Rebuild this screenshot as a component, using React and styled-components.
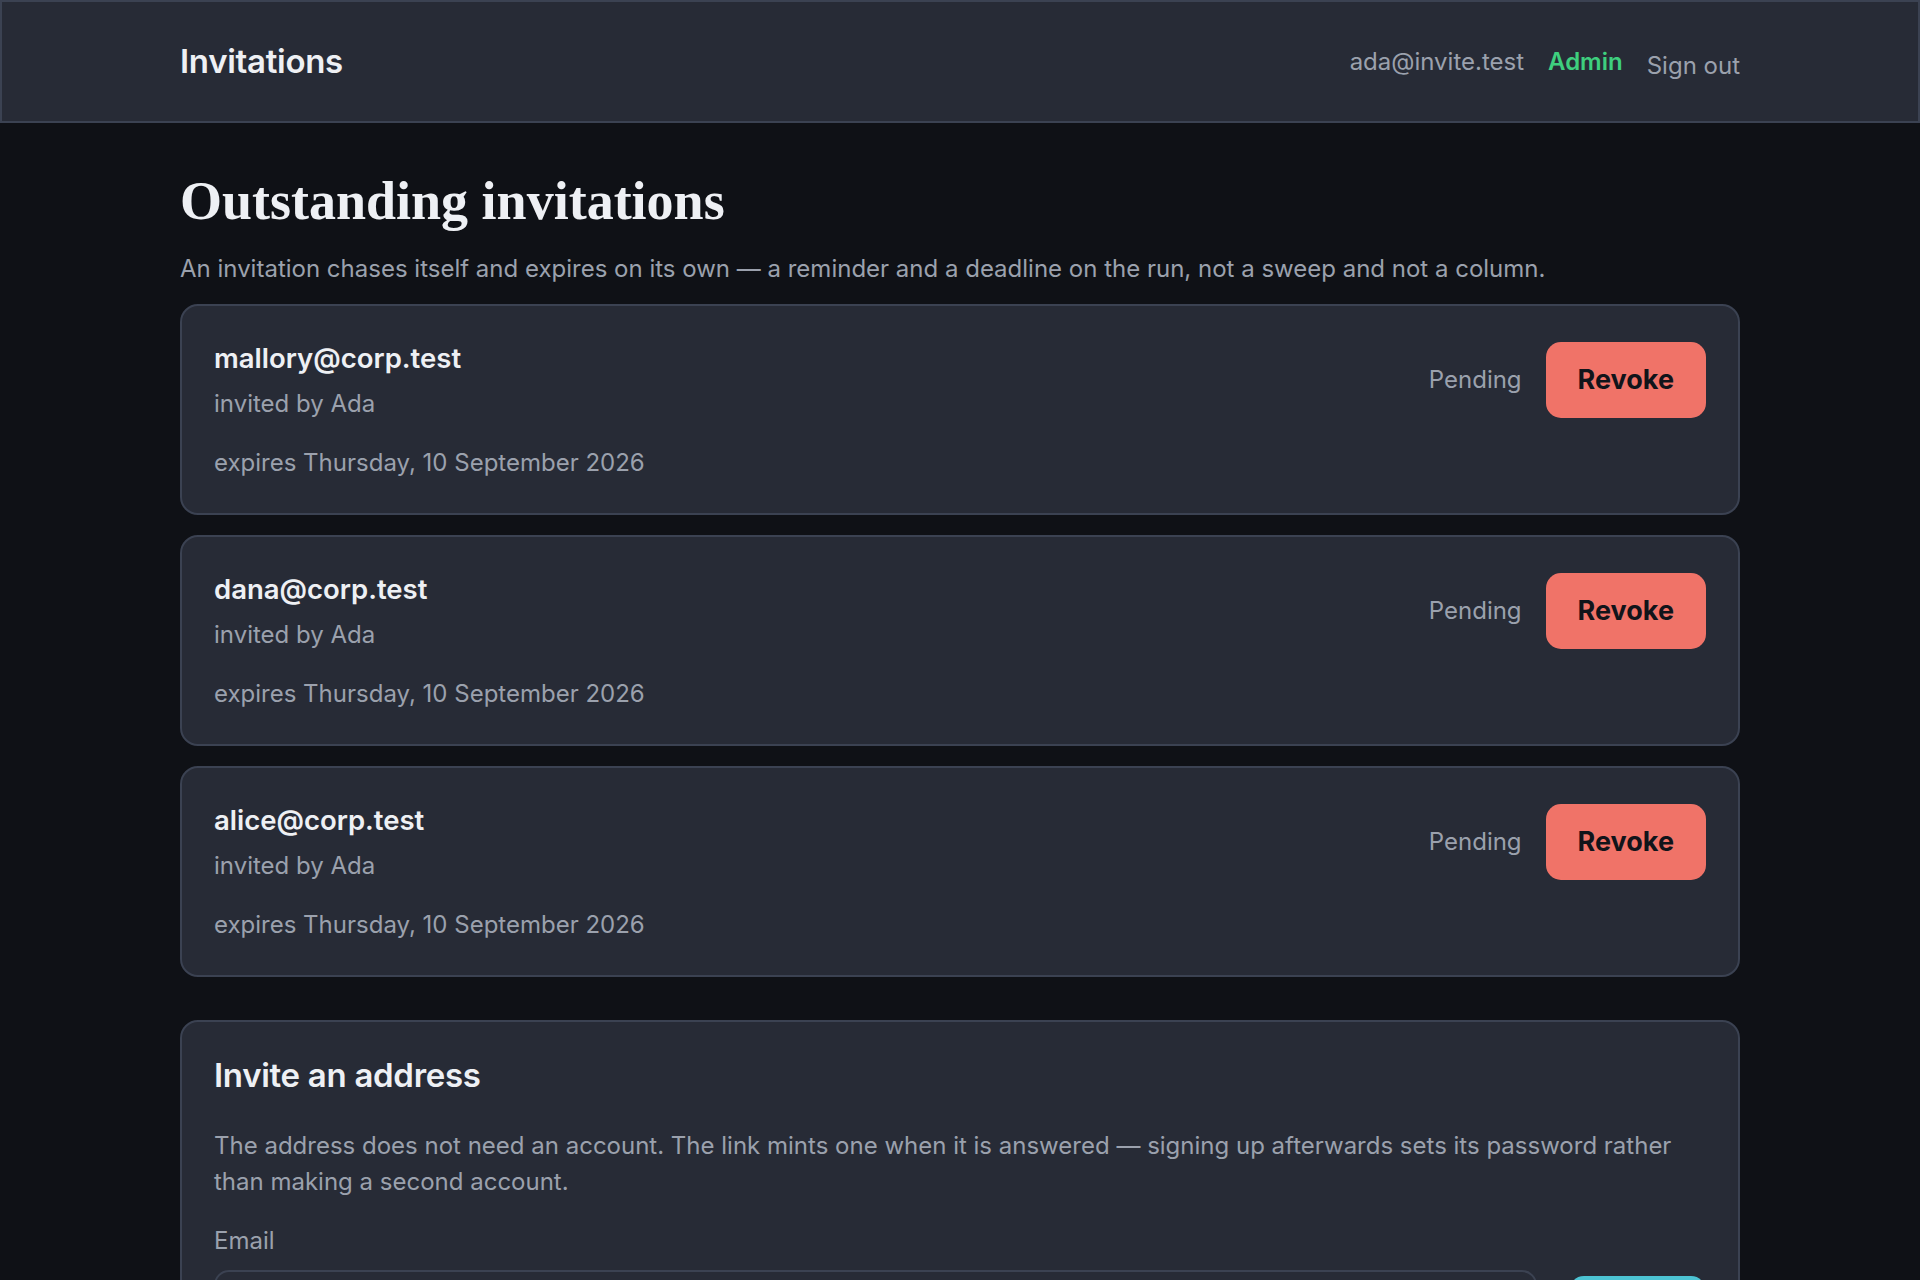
import React, { useState } from 'react'
import styled, { createGlobalStyle } from 'styled-components'

const GlobalStyle = createGlobalStyle`
  body {
    margin: 0;
    background-color: #0f1116;
    font-family: Inter, "Noto Sans", sans-serif;
    color: #eef0f4;
  }
`;

const Header = styled.header`
  border: 2px solid #3b4252;
  background-color: #272b36;
`;
const HeaderInner = styled.div`
  max-width: 1560px;
  margin: 0 auto;
  height: 119px;
  display: flex;
  align-items: center;
  justify-content: space-between;
`;
const Brand = styled.div`
  font-size: 33px;
  font-weight: 600;
  letter-spacing: -0.3px;
  margin-bottom: 2px;
`;
const Nav = styled.nav`
  display: flex;
  align-items: center;
  gap: 24px;
  font-size: 24px;
`;
const UserEmail = styled.span`
  color: #9ba1ad;
`;
const Role = styled.span`
  color: #3ecf7e;
  font-weight: 600;
`;
const SignOut = styled.button`
  background: none;
  border: none;
  padding: 0;
  margin-top: 8px;
  font-family: inherit;
  font-size: 24px;
  color: #9ba1ad;
  cursor: pointer;
`;

const Main = styled.main`
  max-width: 1560px;
  margin: 0 auto;
  padding: 46px 0 60px;
`;
const Title = styled.h1`
  margin: 0;
  font-family: "Liberation Serif", "Times New Roman", serif;
  font-size: 54px;
  font-weight: 700;
  line-height: 1.2;
`;
const Lead = styled.p`
  margin: 17px 0 17px;
  font-size: 24px;
  line-height: 36px;
  color: #9ba1ad;
`;
const List = styled.div`
  display: flex;
  flex-direction: column;
  gap: 20px;
`;
const Card = styled.section`
  background-color: #272b36;
  border: 2px solid #3b4252;
  border-radius: 18px;
  padding: 32px;
  margin-top: ${(props) => props.spaced ? "43px" : "0"};
`;
const Row = styled.div`
  display: flex;
  align-items: center;
  justify-content: space-between;
`;
const Who = styled.div`
  display: flex;
  flex-direction: column;
  gap: 8px;
`;
const Address = styled.div`
  font-size: 27.5px;
  font-weight: 600;
  line-height: 40px;
`;
const Meta = styled.div`
  font-size: 24px;
  line-height: 36px;
  color: #9ba1ad;
  margin-top: ${(props) => props.gap || 0}px;
`;
const Actions = styled.div`
  display: flex;
  align-items: center;
  gap: 24px;
`;
const Status = styled.span`
  font-size: 24px;
  color: #9ba1ad;
`;
const Button = styled.button`
  border: none;
  border-radius: 15px;
  height: 76px;
  padding: 0 32px;
  font-family: inherit;
  font-size: 27px;
  font-weight: 700;
  color: #11141a;
  background-color: ${(props) => props.tone === "cyan" ? "#4cc3d3" : "#f07368"};
  cursor: pointer;
`;
const FormTitle = styled.h2`
  margin: 0;
  font-size: 33px;
  font-weight: 600;
  line-height: 43px;
  letter-spacing: -0.3px;
`;
const FormText = styled.p`
  margin: 31px 0 23px;
  font-size: 24px;
  line-height: 36px;
  color: #9ba1ad;
`;
const Label = styled.label`
  display: block;
  font-size: 24px;
  line-height: 36px;
  color: #9ba1ad;
  margin-bottom: 11px;
`;
const FormRow = styled.form`
  display: flex;
  align-items: center;
  gap: 32px;
`;
const Input = styled.input`
  flex: 1;
  height: 88px;
  box-sizing: border-box;
  border: 2px solid #3b4252;
  border-radius: 15px;
  background-color: #272b36;
  padding: 0 24px;
  font-family: inherit;
  font-size: 24px;
  color: #eef0f4;
`;

const invites = [
  { email: "mallory@corp.test", by: "Ada", expires: "Thursday, 10 September 2026" },
  { email: "dana@corp.test", by: "Ada", expires: "Thursday, 10 September 2026" },
  { email: "alice@corp.test", by: "Ada", expires: "Thursday, 10 September 2026" },
];

export default function App() {
  const [email, setEmail] = useState("")

  return (
    <>
      <GlobalStyle />
      <Header>
        <HeaderInner>
          <Brand>Invitations</Brand>
          <Nav>
            <UserEmail>ada@invite.test</UserEmail>
            <Role>Admin</Role>
            <SignOut>Sign out</SignOut>
          </Nav>
        </HeaderInner>
      </Header>
      <Main>
        <Title>Outstanding invitations</Title>
        <Lead>
          An invitation chases itself and expires on its own — a reminder and a deadline on the run, not a sweep and not a column.
        </Lead>
        <List>
          {invites.map((inv) => (
            <Card key={inv.email}>
              <Row>
                <Who>
                  <Address>{inv.email}</Address>
                  <Meta>invited by {inv.by}</Meta>
                </Who>
                <Actions>
                  <Status>Pending</Status>
                  <Button>Revoke</Button>
                </Actions>
              </Row>
              <Meta gap={23}>expires {inv.expires}</Meta>
            </Card>
          ))}
        </List>
        <Card spaced>
          <FormTitle>Invite an address</FormTitle>
          <FormText>
            The address does not need an account. The link mints one when it is answered — signing up afterwards sets its password rather than making a second account.
          </FormText>
          <Label htmlFor="invite-email">Email</Label>
          <FormRow onSubmit={(e) => e.preventDefault()}>
            <Input id="invite-email" type="email" value={email} onChange={(e) => setEmail(e.target.value)} />
            <Button tone="cyan" type="submit">Invite</Button>
          </FormRow>
        </Card>
      </Main>
    </>
  )
}
